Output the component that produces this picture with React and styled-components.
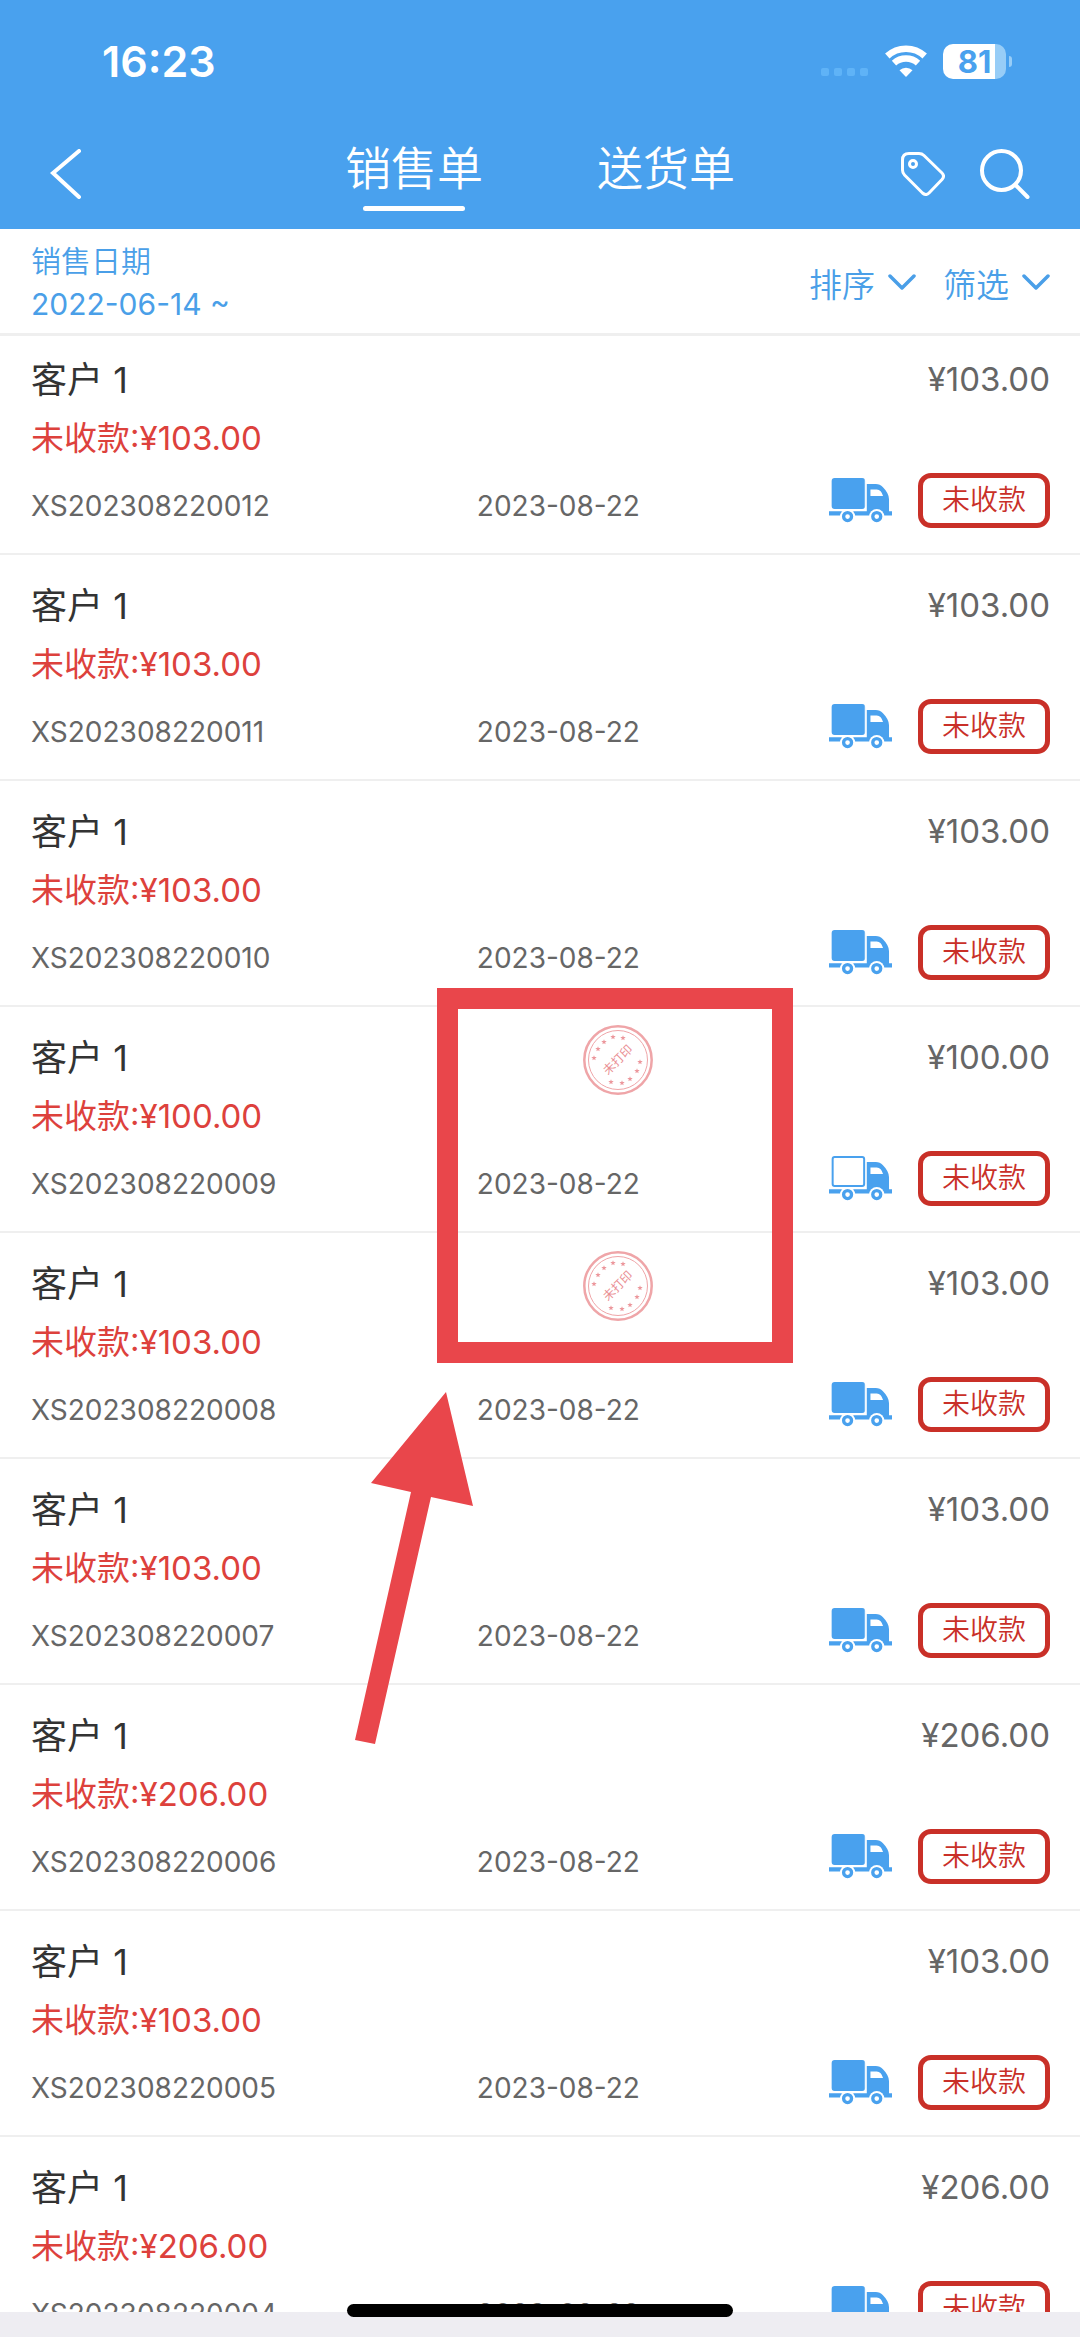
import React, { useState } from "react";
import styled, { createGlobalStyle } from "styled-components";

const GlobalStyle = createGlobalStyle`
  * {
    box-sizing: border-box;
  }

  body {
    margin: 0;
    background: #eeedf2;
    font-family: Inter, "Noto Sans CJK SC", sans-serif;
  }

  button {
    padding: 0;
    border: none;
    background: none;
    color: inherit;
    font: inherit;
    cursor: pointer;
  }

  svg {
    display: block;
    flex: none;
  }
`;

// Styled components
const Page = styled.div`
  position: relative;
  display: flex;
  flex-direction: column;
  height: 100vh;
  overflow: hidden;
  background: #eeedf2;
`;

const Header = styled.header`
  flex: none;
  background: #49a1ee;
  color: #fff;
`;

const StatusBar = styled.div`
  display: flex;
  align-items: center;
  height: 122px;
  padding: 0 68px 0 102px;
`;

const Time = styled.span`
  flex: 1;
  font-size: 43px;
  font-weight: 600;
`;

const SignalDots = styled.span`
  display: flex;
  gap: 5px;
  margin: 22px 17px 0 0;
`;

const Dot = styled.i`
  width: 8px;
  height: 8px;
  border-radius: 2px;
  background: #5fb3f7;
`;

const Battery = styled.span`
  display: flex;
  align-items: center;
  gap: 3px;
  margin-left: 16px;

  &::after {
    content: "";
    width: 3px;
    height: 11px;
    border-radius: 0 5px 5px 0;
    background: #97cdf7;
  }
`;

const BatteryLevel = styled.span`
  width: 63px;
  height: 35px;
  border-radius: 10px;
  background: linear-gradient(to right, #fff 82%, #97cdf7 82%);
  color: #49a1ee;
  font-size: 31px;
  font-weight: 700;
  line-height: 35px;
  text-align: center;
`;

const NavBar = styled.nav`
  display: grid;
  grid-template-columns: 1fr auto 1fr;
  height: 107px;
  padding: 0 50px 3px;
`;

const IconButton = styled.button`
  display: flex;
  align-items: center;
`;

const NavActions = styled.div`
  display: flex;
  justify-content: flex-end;
  gap: 35px;
`;

const Tabs = styled.div`
  display: flex;
  align-items: flex-end;
  gap: 114px;
  padding-bottom: 15px;
`;

const Tab = styled.button`
  display: flex;
  flex-direction: column;
  align-items: center;
  gap: 8px;
  font-size: 46px;
  font-weight: 350;
  line-height: 60px;

  &::after {
    content: "";
    width: 102px;
    height: 5px;
    border-radius: 3px;
    background: ${(props) => (props.$active ? "#fff" : "transparent")};
  }
`;

const FilterBar = styled.div`
  position: relative;
  z-index: 1;
  display: flex;
  flex: none;
  align-items: center;
  justify-content: space-between;
  height: 107px;
  padding: 3px 30px 0 31px;
  border-bottom: 3px solid #efefef;
  background: #fff;
  color: #4a9fe8;
`;

const DateRange = styled.button`
  font-size: 30px;
  line-height: 43px;
  text-align: left;
`;

const RangeLabel = styled.span`
  display: block;
  font-weight: 350;
`;

const FilterActions = styled.div`
  display: flex;
  gap: 27px;
`;

const FilterButton = styled.button`
  display: flex;
  align-items: center;
  gap: 13px;
  font-size: 33px;
  font-weight: 350;
`;

const List = styled.ul`
  flex: 1;
  min-height: 0;
  margin: -7px 0 0;
  padding: 0;
  overflow: hidden;
  background: #fff;
  list-style: none;
`;

const Row = styled.li`
  display: grid;
  grid-template-columns: 7fr 9fr;
  padding: 18px 30px 25px 31px;
  border-bottom: 2px solid #efefef;
  color: #666;
`;

const Summary = styled.div`
  display: flex;
  flex-direction: column;
  padding: 9px 0 4px;
`;

const Customer = styled.span`
  color: #333;
  font-size: 36px;
  line-height: 48px;
`;

const Owed = styled.span`
  margin-top: 12px;
  color: #dd413c;
  font-size: 33px;
  line-height: 44px;
`;

const OrderNo = styled.span`
  margin-top: 28px;
  font-size: 28px;
  line-height: 36px;
`;

const Details = styled.div`
  display: flex;
  flex-direction: column;
  justify-content: space-between;
`;

const DetailTop = styled.div`
  display: flex;
  align-items: flex-start;
  padding-left: 106px;
`;

const Amount = styled.span`
  margin-left: auto;
  font-size: 33px;
  line-height: 64px;
`;

const DetailBottom = styled.div`
  display: flex;
  align-items: flex-end;
  justify-content: space-between;
`;

const OrderDate = styled.time`
  font-size: 28px;
  line-height: 44px;
`;

const RowActions = styled.div`
  display: flex;
  align-items: center;
  gap: 26px;
`;

const Badge = styled.span`
  padding: 0 19px;
  border: 5px solid #c93028;
  border-radius: 13px;
  color: #c93028;
  font-size: 28px;
  font-weight: 350;
  line-height: 45px;
`;

const BottomBar = styled.footer`
  flex: none;
  height: 25px;
`;

const HomeIndicator = styled.div`
  position: absolute;
  bottom: 20px;
  left: 50%;
  width: 386px;
  height: 13px;
  border-radius: 7px;
  background: #000;
  transform: translateX(-50%);
`;

const HighlightBox = styled.div`
  position: absolute;
  top: 988px;
  left: 437px;
  width: 356px;
  height: 375px;
  border: 21px solid #e9464b;
  pointer-events: none;
`;

const HighlightArrow = styled.svg`
  position: absolute;
  top: 1392px;
  left: 355px;
  pointer-events: none;
`;

// Icons
const BackIcon = () => (
  <svg width="31" height="50" viewBox="0 0 31 50" fill="none">
    <path d="M29 2 3 24 29 48" stroke="#fff" strokeWidth="4" strokeLinecap="round" />
  </svg>
);

const TagIcon = () => (
  <svg width="44" height="44" viewBox="0 0 44 44" fill="none" stroke="#fff" strokeWidth="3">
    <path
      d="M8 1.5H18Q21 1.5 23 3.5L41 21Q44 24 41 27.5L28 41Q25 44 21.5 41L3.5 23Q1.5 21 1.5 18V8Q1.5 1.5 8 1.5Z"
      strokeLinejoin="round"
    />
    <circle cx="12" cy="12" r="3.5" />
  </svg>
);

const SearchIcon = () => (
  <svg width="50" height="50" viewBox="0 0 50 50" fill="none" stroke="#fff" strokeWidth="4">
    <circle cx="21.5" cy="21.5" r="19.5" />
    <path d="m35.5 36 12 12" strokeLinecap="round" />
  </svg>
);

const WifiIcon = () => (
  <svg width="42" height="32" viewBox="0 0 42 32" fill="none" stroke="#fff" strokeWidth="6.5">
    <path d="M2.3 11A27.5 27.5 0 0 1 39.7 11" />
    <path d="M9 18.2A18 18 0 0 1 33 18.2" />
    <path d="M21 32 14.5 25.3A9.5 9.5 0 0 1 27.5 25.3Z" fill="#fff" stroke="none" />
  </svg>
);

const ChevronDown = () => (
  <svg width="28" height="17" viewBox="0 0 28 17" fill="none">
    <path
      d="M2 2 14 14 26 2"
      stroke="#4a9fe8"
      strokeWidth="3.5"
      strokeLinecap="round"
      strokeLinejoin="round"
    />
  </svg>
);

const TruckIcon = ({ filled }) => (
  <svg width="63" height="45" viewBox="0 0 190 135" fill="#49a1ee">
    <rect
      x="11"
      y="3"
      width="95"
      height="87"
      rx="6"
      fill={filled ? "#49a1ee" : "#fff"}
      stroke="#49a1ee"
      strokeWidth="6"
    />
    {filled && <path d="M109 0V93" stroke="#fff" strokeWidth="2" />}
    <path
      fillRule="evenodd"
      d="M114 18H141Q154 18 162 27Q181 46 181 64V100H190V113H0V100H114ZM125 34V54H163Q158 35 144 34Z"
    />
    <circle cx="56" cy="116" r="23" fill="#fff" />
    <circle cx="144" cy="116" r="23" fill="#fff" />
    <circle cx="56" cy="116" r="12" fill="#fff" stroke="#49a1ee" strokeWidth="10" />
    <circle cx="144" cy="116" r="12" fill="#fff" stroke="#49a1ee" strokeWidth="10" />
  </svg>
);

const stampStars = [
  [11, 33],
  [15, 24],
  [21, 17],
  [30, 12],
  [40, 13],
  [57, 37],
  [54, 46],
  [47, 54],
  [39, 58],
  [28, 57],
];

const Stamp = () => (
  <svg width="70" height="70" viewBox="0 0 70 70" fill="none" stroke="#efa5a8">
    <circle cx="35" cy="35" r="33.7" strokeWidth="2.5" />
    <circle cx="35" cy="35" r="29.5" strokeWidth="1" />
    {stampStars.map(([x, y]) => (
      <path
        key={`${x}-${y}`}
        d="M0-2.8.7-.9 2.7-.9 1.1.4 1.7 2.3 0 1.2-1.7 2.3-1.1.4-2.7-.9-.7-.9Z"
        transform={`translate(${x} ${y})`}
        fill="#ec979c"
        stroke="none"
      />
    ))}
    <text
      x="35"
      y="39"
      transform="rotate(-45 35 35)"
      fill="#ea8f94"
      stroke="none"
      fontSize="12"
      textAnchor="middle"
    >
      未打印
    </text>
  </svg>
);

const orders = [
  { no: "XS202308220012", amount: "103.00", shipped: true },
  { no: "XS202308220011", amount: "103.00", shipped: true },
  { no: "XS202308220010", amount: "103.00", shipped: true },
  { no: "XS202308220009", amount: "100.00", shipped: false, unprinted: true },
  { no: "XS202308220008", amount: "103.00", shipped: true, unprinted: true },
  { no: "XS202308220007", amount: "103.00", shipped: true },
  { no: "XS202308220006", amount: "206.00", shipped: true },
  { no: "XS202308220005", amount: "103.00", shipped: true },
  { no: "XS202308220004", amount: "206.00", shipped: true },
];

const tabs = ["销售单", "送货单"];

const App = () => {
  const [activeTab, setActiveTab] = useState(tabs[0]);

  return (
    <Page>
      <GlobalStyle />
      <Header>
        <StatusBar>
          <Time>16:23</Time>
          <SignalDots>
            <Dot />
            <Dot />
            <Dot />
            <Dot />
          </SignalDots>
          <WifiIcon />
          <Battery>
            <BatteryLevel>81</BatteryLevel>
          </Battery>
        </StatusBar>
        <NavBar>
          <IconButton aria-label="返回">
            <BackIcon />
          </IconButton>
          <Tabs>
            {tabs.map((tab) => (
              <Tab key={tab} $active={tab === activeTab} onClick={() => setActiveTab(tab)}>
                {tab}
              </Tab>
            ))}
          </Tabs>
          <NavActions>
            <IconButton aria-label="标签">
              <TagIcon />
            </IconButton>
            <IconButton aria-label="搜索">
              <SearchIcon />
            </IconButton>
          </NavActions>
        </NavBar>
      </Header>

      <FilterBar>
        <DateRange>
          <RangeLabel>销售日期</RangeLabel>
          2022-06-14 ~
        </DateRange>
        <FilterActions>
          <FilterButton>
            排序
            <ChevronDown />
          </FilterButton>
          <FilterButton>
            筛选
            <ChevronDown />
          </FilterButton>
        </FilterActions>
      </FilterBar>

      <List>
        {orders.map((order) => (
          <Row key={order.no}>
            <Summary>
              <Customer>客户 1</Customer>
              <Owed>未收款:¥{order.amount}</Owed>
              <OrderNo>{order.no}</OrderNo>
            </Summary>
            <Details>
              <DetailTop>
                {order.unprinted && <Stamp />}
                <Amount>¥{order.amount}</Amount>
              </DetailTop>
              <DetailBottom>
                <OrderDate>2023-08-22</OrderDate>
                <RowActions>
                  <TruckIcon filled={order.shipped} />
                  <Badge>未收款</Badge>
                </RowActions>
              </DetailBottom>
            </Details>
          </Row>
        ))}
      </List>

      <BottomBar />
      <HomeIndicator />

      <HighlightBox />
      <HighlightArrow width="120" height="354" viewBox="0 0 120 354">
        <path d="M91 0 118 114 76 105 20 352 0 348 56 100 16 91Z" fill="#e9464b" />
      </HighlightArrow>
    </Page>
  );
};

export default App;
